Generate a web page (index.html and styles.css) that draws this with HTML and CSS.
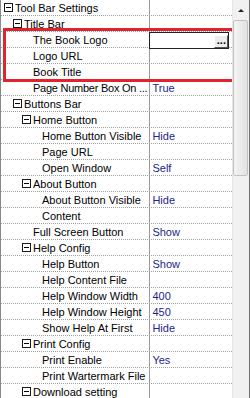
FILE: index.html
```html
<!DOCTYPE html>
<html>

<head>
    <meta http-equiv="Content-Type" content="text/html; charset=utf-8">
    <title>Tool Bar Settings</title>
    <link rel="stylesheet" href="styles.css">
</head>

<body>
    <div class="grid">
        <div class="list">
            <div class="row"><div class="name g0"><span class="box"></span>Tool Bar Settings</div><div class="value"></div></div>
            <div class="row"><div class="name g1"><span class="box"></span>Title Bar</div><div class="value"></div></div>
            <div class="row"><div class="name l2">The Book Logo</div><div class="value"><div class="editor"><span class="dots">...</span></div></div></div>
            <div class="row"><div class="name l2">Logo URL</div><div class="value"></div></div>
            <div class="row"><div class="name l2">Book Title</div><div class="value"></div></div>
            <div class="row"><div class="name l2 tight">Page Number Box On ...</div><div class="value">True</div></div>
            <div class="row"><div class="name g1"><span class="box"></span>Buttons Bar</div><div class="value"></div></div>
            <div class="row"><div class="name g2"><span class="box"></span>Home Button</div><div class="value"></div></div>
            <div class="row"><div class="name l3">Home Button Visible</div><div class="value">Hide</div></div>
            <div class="row"><div class="name l3">Page URL</div><div class="value"></div></div>
            <div class="row"><div class="name l3">Open Window</div><div class="value">Self</div></div>
            <div class="row"><div class="name g2"><span class="box"></span>About Button</div><div class="value"></div></div>
            <div class="row"><div class="name l3">About Button Visible</div><div class="value">Hide</div></div>
            <div class="row"><div class="name l3">Content</div><div class="value"></div></div>
            <div class="row"><div class="name l2">Full Screen Button</div><div class="value">Show</div></div>
            <div class="row"><div class="name g2"><span class="box"></span>Help Config</div><div class="value"></div></div>
            <div class="row"><div class="name l3">Help Button</div><div class="value">Show</div></div>
            <div class="row"><div class="name l3">Help Content File</div><div class="value"></div></div>
            <div class="row"><div class="name l3">Help Window Width</div><div class="value">400</div></div>
            <div class="row"><div class="name l3">Help Window Height</div><div class="value">450</div></div>
            <div class="row"><div class="name l3">Show Help At First</div><div class="value">Hide</div></div>
            <div class="row"><div class="name g2"><span class="box"></span>Print Config</div><div class="value"></div></div>
            <div class="row"><div class="name l3">Print Enable</div><div class="value">Yes</div></div>
            <div class="row"><div class="name l3">Print Wartermark File</div><div class="value"></div></div>
            <div class="row"><div class="name g2"><span class="box"></span>Download setting</div><div class="value"></div></div>
            <div class="mark"></div>
        </div>
        <div class="scrollbar">
            <div class="arrow"></div>
            <div class="thumb"></div>
        </div>
    </div>
</body>
</html>
```

FILE: styles.css
```css
body {
    margin: 0;
    font: 11px "Liberation Sans", Arial, sans-serif;
    color: #000;
}

.grid {
    display: flex;
    width: 250px;
    height: 398px;
    overflow: hidden;
    border-left: 1px solid #8a8a8a;
    border-right: 1px solid #6e6e6e;
    box-sizing: border-box;
    background: #fff;
}

.list {
    position: relative;
    width: 231px;
}

.row {
    display: flex;
    height: 16px;
    line-height: 15px;
    border-bottom: 1px dotted #a0a0a0;
    box-sizing: border-box;
}

.name {
    display: flex;
    align-items: center;
    width: 150px;
    border-right: 1px solid #9a9a9a;
    white-space: nowrap;
    overflow: hidden;
    box-sizing: border-box;
    padding-top: 1px;
}

.tight {
    letter-spacing: -0.25px;
}

.value {
    position: relative;
    width: 80px;
    padding-left: 2px;
    padding-top: 1px;
    color: #1e1e8c;
    white-space: nowrap;
}

.g0 { padding-left: 3px; }
.g1 { padding-left: 12px; }
.g2 { padding-left: 21px; }
.l2 { padding-left: 32px; }
.l3 { padding-left: 41px; }

.box {
    position: relative;
    width: 9px;
    height: 9px;
    margin-right: 2px;
    border: 1px solid #1a1a1a;
    box-sizing: border-box;
    flex: none;
    margin-top: -2px;
}

.box::after {
    content: "";
    position: absolute;
    left: 1px;
    top: 3px;
    width: 5px;
    height: 1px;
    background: #000;
}

.editor {
    position: absolute;
    left: -1px;
    top: 0;
    width: 80px;
    height: 17px;
    border: 1px solid #222;
    background: #fff;
    box-sizing: border-box;
}

.dots {
    position: absolute;
    right: 0;
    top: 2px;
    width: 14px;
    height: 13px;
    line-height: 8px;
    border: 1px solid #777;
    border-color: #fff #555 #555 #fff;
    background: #ececec;
    box-sizing: border-box;
    font-weight: bold;
    text-align: center;
    color: #000;
}

.mark {
    position: absolute;
    left: 2px;
    top: 28px;
    width: 233px;
    height: 54px;
    border: 3px solid #e4222b;
    box-sizing: border-box;
}

.scrollbar {
    position: relative;
    width: 17px;
    background: #f1f1f1;
    border-left: 1px solid #e6e6e6;
    box-sizing: border-box;
}

.arrow {
    margin: 9px auto 0;
    width: 0;
    height: 0;
    border-left: 3px solid transparent;
    border-right: 3px solid transparent;
    border-bottom: 3px solid #222;
}

.thumb {
    margin: 8px 0 0 0;
    width: 15px;
    height: 156px;
    border: 1px solid #c2c2c2;
    border-radius: 2px;
    background: linear-gradient(to right, #f4f4f4, #e2e2e2);
    box-sizing: border-box;
}
```
